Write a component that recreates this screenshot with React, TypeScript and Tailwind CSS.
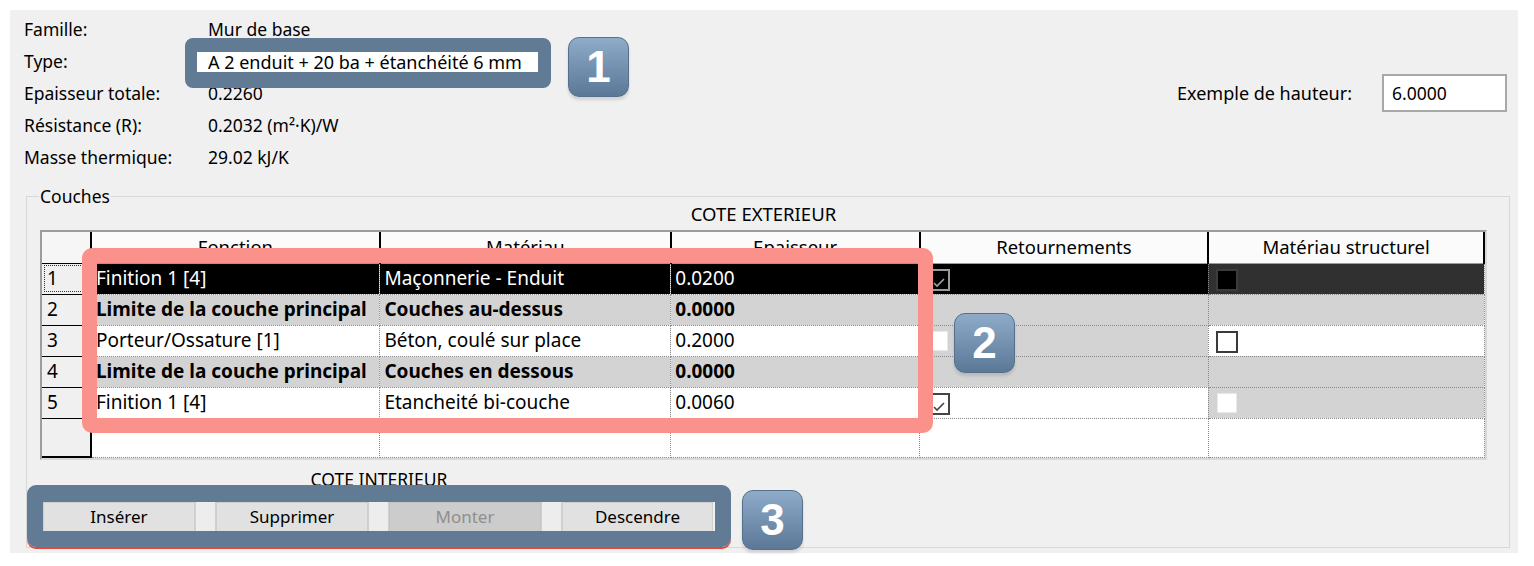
type Box = 'none' | 'selChecked' | 'selBlack' | 'disabled' | 'empty' | 'checked'

interface Layer {
  num: string
  fonction: string
  materiau: string
  epaisseur: string
  bold?: boolean
  selected?: boolean
  mainBg: string
  retBg: string
  ret: Box
  strBg: string
  str: Box
}

const layers: Layer[] = [
  {
    num: '1',
    fonction: 'Finition 1 [4]',
    materiau: 'Maçonnerie - Enduit',
    epaisseur: '0.0200',
    selected: true,
    mainBg: 'bg-black',
    retBg: 'bg-black',
    ret: 'selChecked',
    strBg: 'bg-[#303030]',
    str: 'selBlack',
  },
  {
    num: '2',
    fonction: 'Limite de la couche principal',
    materiau: 'Couches au-dessus',
    epaisseur: '0.0000',
    bold: true,
    mainBg: 'bg-[#d3d3d3]',
    retBg: 'bg-[#d3d3d3]',
    ret: 'none',
    strBg: 'bg-[#d3d3d3]',
    str: 'none',
  },
  {
    num: '3',
    fonction: 'Porteur/Ossature [1]',
    materiau: 'Béton, coulé sur place',
    epaisseur: '0.2000',
    mainBg: 'bg-white',
    retBg: 'bg-[#d3d3d3]',
    ret: 'disabled',
    strBg: 'bg-white',
    str: 'empty',
  },
  {
    num: '4',
    fonction: 'Limite de la couche principal',
    materiau: 'Couches en dessous',
    epaisseur: '0.0000',
    bold: true,
    mainBg: 'bg-[#d3d3d3]',
    retBg: 'bg-[#d3d3d3]',
    ret: 'none',
    strBg: 'bg-[#d3d3d3]',
    str: 'none',
  },
  {
    num: '5',
    fonction: 'Finition 1 [4]',
    materiau: 'Etancheité bi-couche',
    epaisseur: '0.0060',
    mainBg: 'bg-white',
    retBg: 'bg-white',
    ret: 'checked',
    strBg: 'bg-[#d3d3d3]',
    str: 'disabled',
  },
]

const props = [
  { label: 'Famille:', value: 'Mur de base' },
  { label: 'Type:', value: 'A 2 enduit + 20 ba + étanchéité 6 mm', field: true },
  { label: 'Epaisseur totale:', value: '0.2260' },
  { label: 'Résistance (R):', value: '0.2032 (m²·K)/W' },
  { label: 'Masse thermique:', value: '29.02 kJ/K' },
]

const headers = ['Fonction', 'Matériau', 'Epaisseur', 'Retournements', 'Matériau structurel']

function Check({ color }: { color: string }) {
  return (
    <svg viewBox="0 0 18 18" className="w-full h-full">
      <polyline points="4,12 7,15 14,8" fill="none" stroke={color} strokeWidth="1.6" />
    </svg>
  )
}

function CheckBox({ kind }: { kind: Box }) {
  if (kind === 'none') return null
  if (kind === 'selChecked')
    return (
      <div className="ml-[8px] w-[22px] h-[22px] bg-black border-2 border-[#9a9a9a]">
        <Check color="#a0a0a0" />
      </div>
    )
  if (kind === 'selBlack') return <div className="ml-[7px] w-[22px] h-[22px] bg-black border-2 border-[#3c3c3c]" />
  if (kind === 'disabled') return <div className="ml-[8px] w-[20px] h-[20px] bg-white border border-[#e8e8e8]" />
  if (kind === 'empty') return <div className="ml-[7px] w-[22px] h-[22px] bg-white border-2 border-[#3a3a3a]" />
  return (
    <div className="ml-[8px] w-[22px] h-[22px] bg-white border-2 border-[#444]">
      <Check color="#444" />
    </div>
  )
}

function Badge({ n, className }: { n: string; className: string }) {
  return (
    <div
      className={`absolute w-[61px] h-[60px] rounded-[11px] border border-[#55708d] bg-linear-to-b from-[#8fabca] to-[#5b7897] shadow-[0_3px_3px_rgba(0,0,0,0.12)] flex items-center justify-center text-white text-[44px] font-bold font-['Liberation_Sans',Arial,sans-serif] leading-none ${className}`}
    >
      {n}
    </div>
  )
}

export default function App() {
  const ui = "font-['Noto_Sans',sans-serif]"
  return (
    <div className="w-[1534px] h-[566px] bg-white pt-[10px] pl-[10px] overflow-hidden">
      <div className={`relative w-[1508px] h-[543px] bg-[#f0f0f0] text-black text-[17.5px] ${ui}`}>
        {/* Header properties */}
        <div className="flex justify-between pt-[3px] pl-[14px] pr-[11px]">
          <div className="grid grid-cols-[184px_1fr]">
            {props.map((p) => (
              <div key={p.label} className="contents">
                <div className="h-[32px] leading-[32px]">{p.label}</div>
                <div className="h-[32px] flex items-center">
                  {p.field ? (
                    <span className="-ml-[11px] mt-[2px] w-[341px] h-[20px] bg-white pl-[11px] leading-[20px] text-[18px] whitespace-nowrap">
                      {p.value}
                    </span>
                  ) : (
                    p.value
                  )}
                </div>
              </div>
            ))}
          </div>
          <div className="flex items-center gap-[30px] mt-[61px] h-[38px]">
            <span className="text-[18px]">Exemple de hauteur:</span>
            <div className="w-[125px] h-[38px] bg-white border-2 border-[#a8a8a8] pl-[8px] leading-[34px]">6.0000</div>
          </div>
        </div>

        {/* Couches group */}
        <fieldset className="ml-[16px] mt-[12px] w-[1484px] h-[363px] border border-[#d8d8d8] pl-[13px]">
          <legend className="-ml-[1px] px-[1px] leading-[22px]">Couches</legend>
          <div className="-mt-[4px] h-[22px] leading-[22px] text-center w-[1447px] text-[18.5px]">COTE EXTERIEUR</div>
          <div className="mt-[5px] w-[1447px] border-2 border-[#9c9c9c] border-r-[#d8d8d8] border-b-[#d8d8d8] bg-[#f0f0f0] h-[230px]">
            <table className="table-fixed border-collapse text-[19px]">
              <colgroup>
                <col className="w-[49px]" />
                <col className="w-[289px]" />
                <col className="w-[291px]" />
                <col className="w-[249px]" />
                <col className="w-[289px]" />
                <col className="w-[276px]" />
              </colgroup>
              <thead>
                <tr className="h-[31px]">
                  <th className="p-0 bg-[#f6f6f6] border-r-2 border-b border-black" />
                  {headers.map((h) => (
                    <th
                      key={h}
                      className="p-0 bg-[#fbfbfb] font-normal text-[18.5px] text-center border-r-2 border-b border-r-black border-b-[#9a9a9a]"
                    >
                      {h}
                    </th>
                  ))}
                </tr>
              </thead>
              <tbody>
                {layers.map((l) => {
                  const text = l.selected ? 'text-white' : 'text-black'
                  const weight = l.bold ? 'font-bold' : 'font-normal'
                  const cell = `p-0 pl-[4px] h-[31px] whitespace-nowrap overflow-hidden border border-dotted border-[#8a8a8a] ${l.mainBg} ${text} ${weight}`
                  return (
                    <tr key={l.num} className="h-[31px]">
                      <td
                        className={`p-0 pl-[5px] bg-[#f0f0f0] border-r-2 border-b border-black ${
                          l.selected ? 'outline-1 outline-dotted outline-offset-[-3px] outline-[#333]' : ''
                        }`}
                      >
                        {l.num}
                      </td>
                      <td className={cell}>{l.fonction}</td>
                      <td className={cell}>{l.materiau}</td>
                      <td className={cell}>{l.epaisseur}</td>
                      <td className={`p-0 h-[31px] align-top border border-dotted border-[#8a8a8a] ${l.retBg}`}>
                        <div className="pt-[5px]">
                          <CheckBox kind={l.ret} />
                        </div>
                      </td>
                      <td className={`p-0 h-[31px] align-top border border-dotted border-[#8a8a8a] ${l.strBg}`}>
                        <div className="pt-[5px]">
                          <CheckBox kind={l.str} />
                        </div>
                      </td>
                    </tr>
                  )
                })}
                <tr className="h-[39px]">
                  <td className="p-0 bg-[#f0f0f0] border-r-2 border-b-2 border-black" />
                  {[0, 1, 2, 3, 4].map((i) => (
                    <td key={i} className="p-0 bg-white border border-dotted border-[#8a8a8a]" />
                  ))}
                </tr>
              </tbody>
            </table>
          </div>

          {/* Bottom buttons */}
          <div className="ml-[3px] w-[672px]">
            <div className="mt-[8px] h-[22px] leading-[22px] text-center text-[17.5px]">COTE INTERIEUR</div>
            <div className="mt-[12px] flex h-[30px] text-[17px]">
              <button className="w-[152px] bg-[#e1e1e1] border border-[#cfcfcf]">Insérer</button>
              <div className="w-[21px] bg-[#ededed] border-x border-[#d0d0d0]" />
              <button className="w-[152px] bg-[#e1e1e1] border border-[#cfcfcf]">Supprimer</button>
              <div className="w-[21px] bg-[#ededed] border-x border-[#d0d0d0]" />
              <button className="w-[152px] bg-[#cccccc] border border-[#c4c4c4] text-[#8f8f8f]">Monter</button>
              <div className="w-[21px] bg-[#ededed] border-x border-[#d0d0d0]" />
              <button className="w-[151px] bg-[#e1e1e1] border border-[#cfcfcf]">Descendre</button>
            </div>
          </div>
        </fieldset>

        {/* Annotations */}
        <div className="absolute left-[175px] top-[28px] w-[366px] h-[50px] rounded-[8px] border-[#627b95] border-l-[12px] border-t-[14px] border-r-[13px] border-b-[16px]" />
        <Badge n="1" className="left-[558px] top-[27px]" />

        <div className="absolute left-[72px] top-[238px] w-[851px] h-[185px] rounded-[10px] border-[15px] border-[#fa918a]" />
        <Badge n="2" className="left-[944px] top-[303px]" />

        <div className="absolute left-[17px] top-[475px] w-[704px] h-[62px] rounded-[9px] border-[#627b95] border-l-[16px] border-t-[17px] border-r-[16px] border-b-[16px] shadow-[0_2px_0_#e5473c]" />
        <Badge n="3" className="left-[732px] top-[480px]" />
      </div>
    </div>
  )
}
